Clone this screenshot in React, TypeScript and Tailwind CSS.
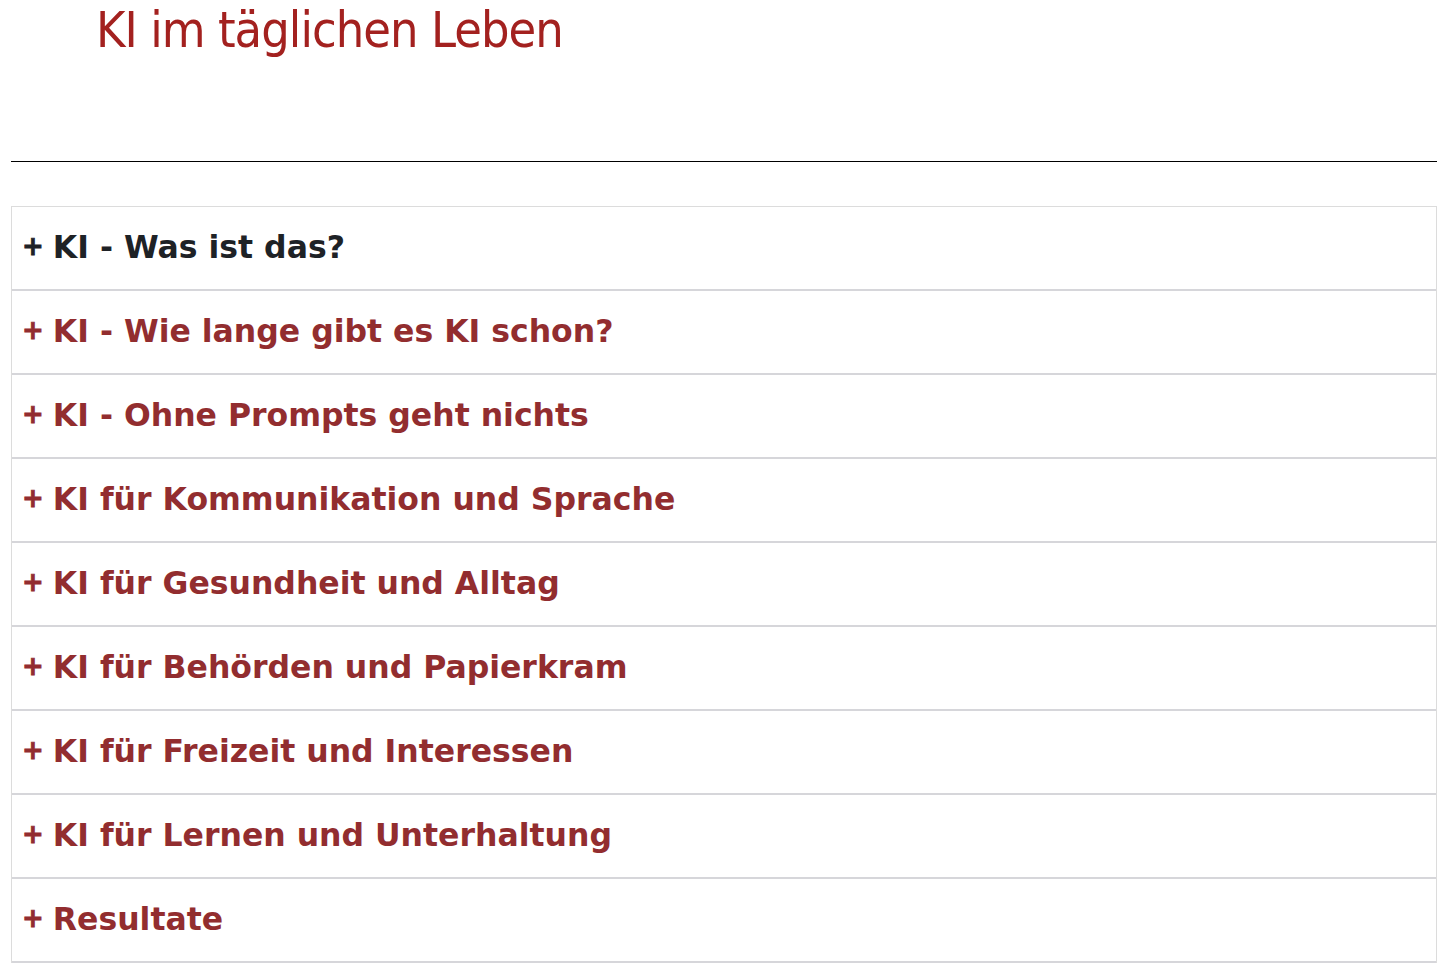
const ITEMS = [
  "KI - Was ist das?",
  "KI - Wie lange gibt es KI schon?",
  "KI - Ohne Prompts geht nichts",
  "KI für Kommunikation und Sprache",
  "KI für Gesundheit und Alltag",
  "KI für Behörden und Papierkram",
  "KI für Freizeit und Interessen",
  "KI für Lernen und Unterhaltung",
  "Resultate",
];

export default function App() {
  return (
    <div className="min-h-screen bg-white pl-[11px] pr-[8px] font-['DejaVu_Sans',sans-serif]">
      <h1 className="pl-[85px] text-[50px] leading-[60px] font-normal tracking-[-0.95px] text-[#a3211f] font-['DejaVu_Sans_Condensed','DejaVu_Sans',sans-serif] font-stretch-condensed">
        KI im täglichen Leben
      </h1>

      <hr className="mt-[101px] border-0 border-t-[1px] border-black" />

      <div className="mt-[44px] border border-[#dcdcdc] border-b-0">
        {ITEMS.map((item, i) => (
          <div
            key={item}
            className={`flex h-[84px] items-center border-b-2 border-[#d6d6da] pl-[10px] font-bold ${
              i === 0 ? "text-[#1e2226]" : "text-[#922d2f]"
            }`}
          >
            <span className="relative -top-[2px] text-[26px] leading-none [-webkit-text-stroke:0.8px_currentColor]">+</span>
            <span className="ml-[9px] text-[31.5px]">{item}</span>
          </div>
        ))}
      </div>
    </div>
  );
}
